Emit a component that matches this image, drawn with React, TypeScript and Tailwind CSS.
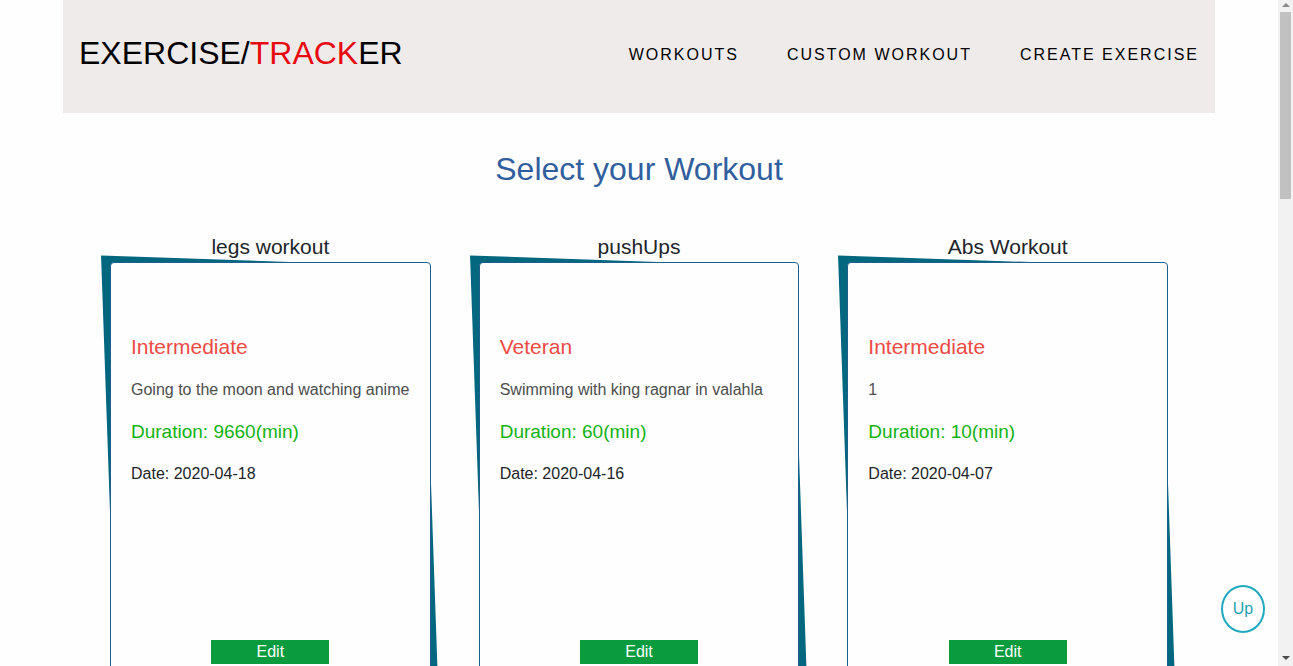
type Workout = {
  name: string;
  level: string;
  description: string;
  minutes: number;
  date: string;
};

const workouts: Workout[] = [
  {
    name: "legs workout",
    level: "Intermediate",
    description: "Going to the moon and watching anime",
    minutes: 9660,
    date: "2020-04-18",
  },
  {
    name: "pushUps",
    level: "Veteran",
    description: "Swimming with king ragnar in valahla",
    minutes: 60,
    date: "2020-04-16",
  },
  {
    name: "Abs Workout",
    level: "Intermediate",
    description: "1",
    minutes: 10,
    date: "2020-04-07",
  },
];

const links = ["Workouts", "Custom Workout", "Create Exercise"];

function Header() {
  return (
    <header className="flex h-[113px] items-center justify-between bg-[#efebeb] px-4 pb-2 text-black">
      <a href="#home" className="text-[32px] leading-10 uppercase">
        Exercise/<span className="text-[#e8090f]">Track</span>er
      </a>
      <nav className="flex gap-12 pt-1">
        {links.map((label) => (
          <a key={label} href="#nav" className="leading-6 tracking-[2px] uppercase">
            {label}
          </a>
        ))}
      </nav>
    </header>
  );
}

function WorkoutCard({ workout }: { workout: Workout }) {
  return (
    <article className="min-w-0 flex-1">
      <h2 className="pb-px text-center text-[21px] leading-7">{workout.name}</h2>
      <div className="relative h-[500px]">
        <div className="absolute -inset-y-px -right-px left-0 skew-[2deg] bg-[#03677f]" />
        <div className="relative flex h-full flex-col rounded border border-[#1f5f8c] bg-[#fefefe] px-5 pt-[68px]">
          <h3 className="text-[21px] leading-8 text-[#ee4a44]">{workout.level}</h3>
          <p className="mt-[15px] leading-6 whitespace-nowrap text-[#4d4d4d]">{workout.description}</p>
          <p className="mt-4 text-[19px] leading-7 text-[#12b312]">Duration: {workout.minutes}(min)</p>
          <p className="mt-4 leading-6">Date: {workout.date}</p>
          <button
            type="button"
            className="mt-auto mb-[97px] h-6 w-[118px] self-center bg-[#099b3e] leading-6 text-white"
          >
            Edit
          </button>
        </div>
      </div>
    </article>
  );
}

function ScrollRail() {
  return (
    <div className="flex w-[15px] shrink-0 flex-col items-center bg-[#f2f2f2]" aria-hidden="true">
      <svg viewBox="0 0 14 12" className="h-3 w-3.5 shrink-0">
        <path d="M3 7 L7 3 L11 7 Z" fill="#8b8b8b" />
      </svg>
      <div className="h-[187px] w-[11px] bg-[#c1c1c1]" />
      <svg viewBox="0 0 14 14" className="mt-auto h-3.5 w-3.5 shrink-0">
        <path d="M3 4 L11 4 L7 8 Z" fill="#4a4a4a" />
      </svg>
    </div>
  );
}

export default function App() {
  return (
    <div className="flex h-screen overflow-hidden bg-[#fefefe] font-['Liberation_Sans',Arial,sans-serif] text-base text-[#212529]">
      <div className="min-w-0 flex-1 px-[63px]">
        <Header />
        <main className="px-[47px]">
          <h1 className="mt-8 text-center text-[32px] leading-12 text-[#315f9e]">Select your Workout</h1>
          <div className="mt-10 flex gap-12">
            {workouts.map((workout) => (
              <WorkoutCard key={workout.name} workout={workout} />
            ))}
          </div>
        </main>
      </div>
      <button
        type="button"
        className="fixed right-7 bottom-[33px] h-12 w-11 rounded-[50%] border-2 border-[#1fa8be] bg-white text-[#1f9fb5]"
      >
        Up
      </button>
      <ScrollRail />
    </div>
  );
}
